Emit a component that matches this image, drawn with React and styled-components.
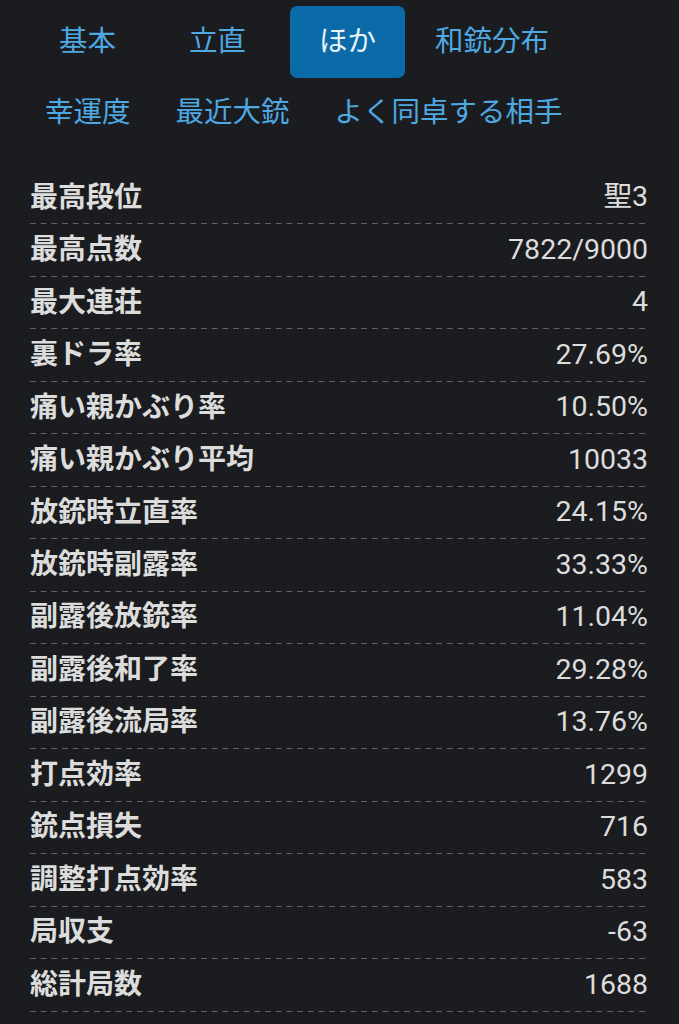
import React from "react";
import styled, { createGlobalStyle } from "styled-components";

const Global = createGlobalStyle`
  html, body { margin: 0; padding: 0; background: #1b1c1f; }
  body { font-family: "Noto Sans CJK JP", "Noto Sans", Roboto, sans-serif; }
`;

const Page = styled.div`
  width: 679px;
  min-height: 1024px;
  box-sizing: border-box;
  background: #1b1c1f;
  padding: 6px 30px 0 30px;
  overflow: hidden;
`;

const TabRow = styled.div`
  display: flex;
  gap: 15px;
  height: 71px;
`;

const Tab = styled.div`
  min-width: 115px;
  box-sizing: border-box;
  padding: 0 15px 6px;
  height: 72px;
  display: flex;
  align-items: center;
  justify-content: center;
  border-radius: 7px;
  font-size: 28.5px;
  line-height: 1;
  white-space: nowrap;
  color: ${(p) => (p.$active ? "#e8f2f8" : "#4ea8e2")};
  background: ${(p) => (p.$active ? "#0a6ba8" : "transparent")};
`;

const Table = styled.div`
  margin-top: 24px;
  width: 618px;
`;

const Row = styled.div`
  display: flex;
  align-items: center;
  justify-content: space-between;
  height: 52.47px;
  box-sizing: border-box;
  padding-bottom: 7px;
  background-image: linear-gradient(to right, #606266 0 6px, transparent 6px 10.7px);
  background-size: 10.7px 1px;
  background-repeat: repeat-x;
  background-position: 0 100%;
`;

const Label = styled.div`
  font-family: "Noto Sans CJK JP", sans-serif;
  font-weight: 700;
  font-size: 28px;
  color: #dcdcdc;
  line-height: 1;
`;

const Value = styled.div`
  font-family: Roboto, "Noto Sans CJK JP", sans-serif;
  font-size: 28.5px;
  color: #dcdcdc;
  line-height: 1;
  margin-top: 6px;
`;

const tabs1 = ["基本", "立直", "ほか", "和銃分布"];
const tabs2 = ["幸運度", "最近大銃", "よく同卓する相手"];

const rows = [
  ["最高段位", "聖3"],
  ["最高点数", "7822/9000"],
  ["最大連荘", "4"],
  ["裏ドラ率", "27.69%"],
  ["痛い親かぶり率", "10.50%"],
  ["痛い親かぶり平均", "10033"],
  ["放銃時立直率", "24.15%"],
  ["放銃時副露率", "33.33%"],
  ["副露後放銃率", "11.04%"],
  ["副露後和了率", "29.28%"],
  ["副露後流局率", "13.76%"],
  ["打点効率", "1299"],
  ["銃点損失", "716"],
  ["調整打点効率", "583"],
  ["局収支", "-63"],
  ["総計局数", "1688"],
];

export default function App() {
  return (
    <Page>
      <Global />
      <TabRow>
        {tabs1.map((t) => (
          <Tab key={t} $active={t === "ほか"}>{t}</Tab>
        ))}
      </TabRow>
      <TabRow>
        {tabs2.map((t) => (
          <Tab key={t}>{t}</Tab>
        ))}
      </TabRow>
      <Table>
        {rows.map(([l, v]) => (
          <Row key={l}>
            <Label>{l}</Label>
            <Value>{v}</Value>
          </Row>
        ))}
      </Table>
    </Page>
  );
}
